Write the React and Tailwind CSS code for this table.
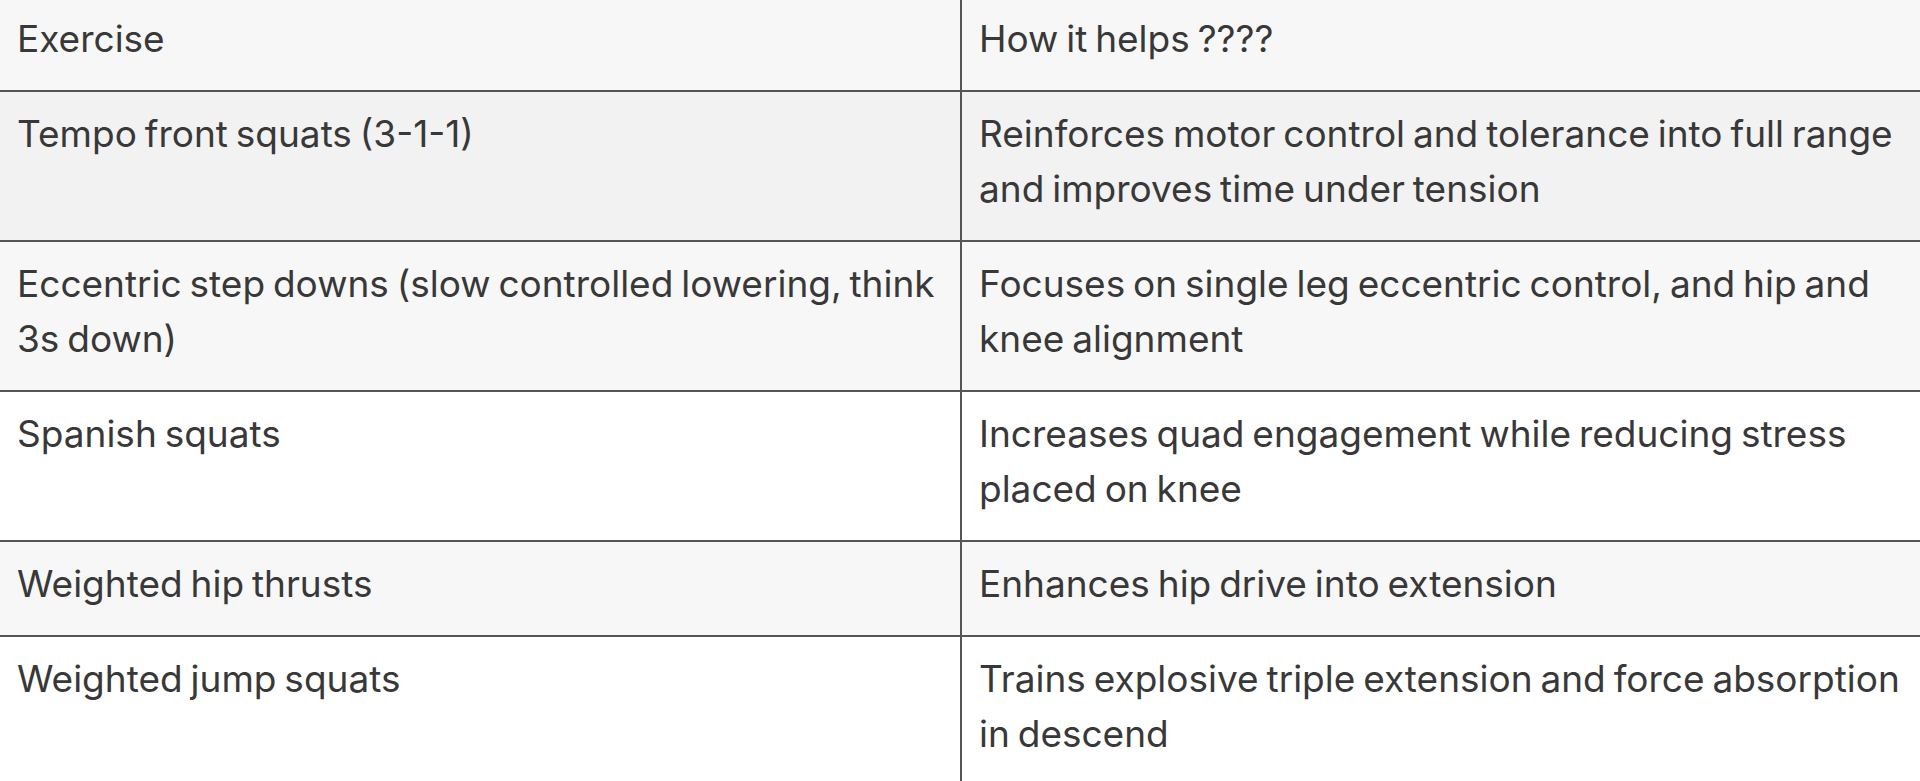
const rows = [
  {
    exercise: "Tempo front squats (3-1-1)",
    helps: "Reinforces motor control and tolerance into full range and improves time under tension",
    bg: "bg-[#f2f2f2]",
  },
  {
    exercise: "Eccentric step downs (slow controlled lowering, think 3s down)",
    helps: "Focuses on single leg eccentric control, and hip and knee alignment",
    bg: "bg-[#f7f7f7]",
  },
  {
    exercise: "Spanish squats",
    helps: "Increases quad engagement while reducing stress placed on knee",
    bg: "bg-white",
  },
  {
    exercise: "Weighted hip thrusts",
    helps: "Enhances hip drive into extension",
    bg: "bg-[#f7f7f7]",
  },
  {
    exercise: "Weighted jump squats",
    helps: "Trains explosive triple extension and force absorption in descend",
    bg: "bg-white",
  },
];

export default function App() {
  return (
    <div
      className="w-full h-[781px] overflow-hidden bg-white text-[#383838] text-[37px] leading-[55px] [word-spacing:-2.5px]"
      style={{ fontFamily: "Inter, 'Liberation Sans', sans-serif" }}
    >
      <div className="grid grid-cols-[962px_1fr] bg-[#f7f7f7] border-b-2 border-[#555]">
        <div className="px-[17px] pt-[11px] pb-[24px] border-r-2 border-[#555]">Exercise</div>
        <div className="px-[17px] pt-[11px] pb-[24px]">How it helps ????</div>
      </div>
      {rows.map((r) => (
        <div
          key={r.exercise}
          className={`grid grid-cols-[962px_1fr] border-b-2 border-[#555] ${r.bg}`}
        >
          <div className="px-[17px] pt-[14px] pb-[24px] border-r-2 border-[#555]">{r.exercise}</div>
          <div className="px-[17px] pt-[14px] pb-[24px]">{r.helps}</div>
        </div>
      ))}
    </div>
  );
}
